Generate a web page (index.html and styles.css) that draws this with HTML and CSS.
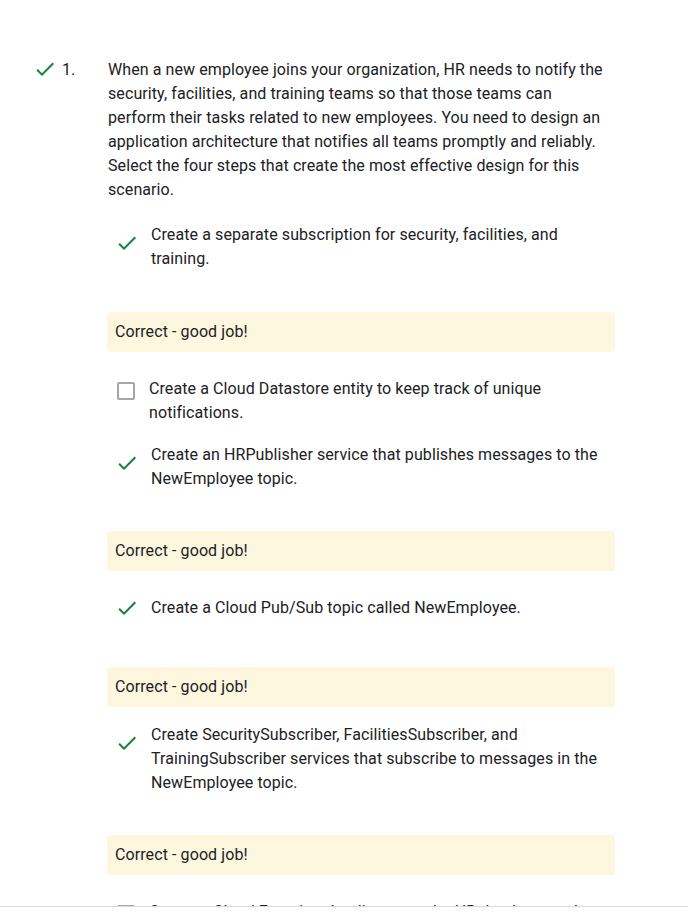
FILE: index.html
```html
<!DOCTYPE html>
<html lang="en">
<head>
<meta charset="utf-8">
<title>Quiz results</title>
<link rel="stylesheet" href="styles.css">
</head>
<body>
<div class="page">
  <main class="scroll">
    <div class="question">
      <svg class="icon q-icon" viewBox="0 0 24 24" aria-hidden="true"><path d="M9 16.17L4.83 12l-1.42 1.41L9 19 21 7l-1.41-1.41z"/></svg>
      <span class="q-num">1.</span>
      <p class="q-text">When a new employee joins your organization, HR needs to notify the security, facilities, and training teams so that those teams can perform their tasks related to new employees. You need to design an application architecture that notifies all teams promptly and reliably. Select the four steps that create the most effective design for this scenario.</p>
    </div>

    <div class="answers">
      <div class="option option--first">
        <svg class="icon opt-icon" viewBox="0 0 24 24" aria-hidden="true"><path d="M9 16.17L4.83 12l-1.42 1.41L9 19 21 7l-1.41-1.41z"/></svg>
        <span class="opt-text">Create a separate subscription for security, facilities, and training.</span>
      </div>
      <div class="feedback feedback--a">Correct - good job!</div>

      <div class="option option--box option--after-fb">
        <span class="checkbox"></span>
        <span class="opt-text">Create a Cloud Datastore entity to keep track of unique notifications.</span>
      </div>

      <div class="option option--tight">
        <svg class="icon opt-icon" viewBox="0 0 24 24" aria-hidden="true"><path d="M9 16.17L4.83 12l-1.42 1.41L9 19 21 7l-1.41-1.41z"/></svg>
        <span class="opt-text">Create an HRPublisher service that publishes messages to the NewEmployee topic.</span>
      </div>
      <div class="feedback feedback--b">Correct - good job!</div>

      <div class="option option--single option--after-fb">
        <svg class="icon opt-icon" viewBox="0 0 24 24" aria-hidden="true"><path d="M9 16.17L4.83 12l-1.42 1.41L9 19 21 7l-1.41-1.41z"/></svg>
        <span class="opt-text">Create a Cloud Pub/Sub topic called NewEmployee.</span>
      </div>
      <div class="feedback feedback--c">Correct - good job!</div>

      <div class="option option--close">
        <svg class="icon opt-icon" viewBox="0 0 24 24" aria-hidden="true"><path d="M9 16.17L4.83 12l-1.42 1.41L9 19 21 7l-1.41-1.41z"/></svg>
        <span class="opt-text">Create SecuritySubscriber, FacilitiesSubscriber, and TrainingSubscriber services that subscribe to messages in the NewEmployee topic.</span>
      </div>
      <div class="feedback feedback--b">Correct - good job!</div>

      <div class="option option--box option--last">
        <span class="checkbox"></span>
        <span class="opt-text">Create a Cloud Function that listens to the HR database and sends notifications.</span>
      </div>
    </div>
  </main>
  <footer class="footer"></footer>
</div>
</body>
</html>
```

FILE: styles.css
```css
* { box-sizing: border-box; }

html, body {
  margin: 0;
  padding: 0;
  background: #ffffff;
}

body {
  font-family: Roboto, "Liberation Sans", Arial, sans-serif;
  font-size: 16px;
  line-height: 24px;
  letter-spacing: 0.09px;
  color: #202124;
}

.page {
  height: 916px;
  display: flex;
  flex-direction: column;
}

.scroll {
  height: 906px;
  flex: none;
  overflow: hidden;
  padding-top: 58px;
}

.footer {
  flex: 1;
  border-top: 1px solid #dadce0;
  background: #ffffff;
}

.icon {
  width: 24px;
  height: 24px;
  flex: none;
  fill: #188038;
  display: block;
}

.question {
  display: flex;
  align-items: flex-start;
  padding-left: 33px;
}

.q-icon {
  margin-top: -1px;
}

.q-num {
  flex: none;
  width: 51px;
  padding-left: 5px;
}

.q-text {
  margin: 0;
  width: 500px;
}

.answers {
  margin-left: 107px;
  width: 508px;
  display: flex;
  flex-direction: column;
}

.option {
  display: flex;
  align-items: flex-start;
  padding-left: 8px;
  padding-right: 8px;
  gap: 12px;
}

.opt-icon {
  margin-top: 8px;
}

.opt-text {
  flex: 1;
  min-width: 0;
}

.option--single .opt-icon {
  margin-top: 0;
}

.option--box {
  padding-left: 10px;
  gap: 14px;
}

.checkbox {
  flex: none;
  width: 18px;
  height: 18px;
  margin-top: 5px;
  border: 2px solid #a6a6a6;
  border-radius: 2px;
  background: #ffffff;
}

.option--first { margin-top: 21px; }
.option--after-fb { margin-top: 25px; }
.option--tight { margin-top: 18px; }
.option--close { margin-top: 16px; }
.option--last { margin-top: 25px; }

.feedback {
  height: 40px;
  padding: 8px;
  background: #fef7e0;
  border-radius: 4px;
  color: #202124;
}

.feedback--a { margin-top: 41px; }
.feedback--b { margin-top: 40px; }
.feedback--c { margin-top: 47px; }
```
